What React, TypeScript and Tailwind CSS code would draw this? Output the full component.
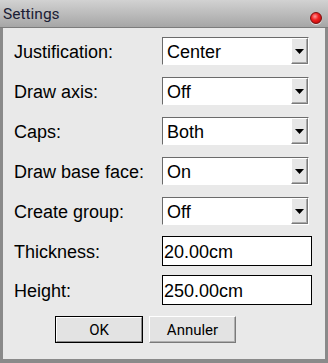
import React from "react";

const labelCls =
  "w-[148px] pt-[2px] text-[18px] leading-none text-black [font-family:'Liberation_Sans',Arial,sans-serif]";

function Dropdown({ value }: { value: string }) {
  return (
    <div className="flex h-[28px] w-[147px] border border-t-[#6b6b6b] border-l-[#6b6b6b] border-b-white border-r-white">
      <div className="flex flex-1 items-center bg-white pl-[4px] pt-[2px] text-[18px] leading-none text-black [font-family:'Liberation_Sans',Arial,sans-serif]">
        {value}
      </div>
      <div className="flex w-[17px] items-center justify-center border border-t-white border-l-white border-b-[#7a7a7a] border-r-[#7a7a7a] bg-[#e6e6e6] shadow-[inset_-1px_-1px_0_#a8a8a8]">
        <svg width="9" height="5" viewBox="0 0 9 5">
          <polygon points="0,0 9,0 4.5,5" fill="#000" />
        </svg>
      </div>
    </div>
  );
}

function TextInput({ value }: { value: string }) {
  return (
    <div className="flex h-[30px] w-[150px] items-center border border-black bg-white pl-[1px] pt-[1px] text-[18px] leading-none text-black [font-family:'Liberation_Sans',Arial,sans-serif]">
      {value}
    </div>
  );
}

export default function App() {
  const rows: [string, string][] = [
    ["Justification:", "Center"],
    ["Draw axis:", "Off"],
    ["Caps:", "Both"],
    ["Draw base face:", "On"],
    ["Create group:", "Off"],
  ];
  return (
    <div className="flex h-[363px] w-[328px] flex-col bg-[#8a8a8a]">
      <div className="relative flex h-[28px] items-center bg-gradient-to-b from-[#d2d2d2] to-[#a6a6a6] pl-[3px] pt-[3px] border-b border-[#7c7c7c]">
        <span className="text-[15.5px] leading-none text-[#1b2035] [font-family:Roboto,'Noto_Sans',sans-serif]">
          Settings
        </span>
        <div className="absolute left-[310px] top-[12px] h-[12px] w-[12px] rounded-full border border-[#7a1010] bg-[radial-gradient(circle_at_40%_35%,#ff9a9a_0%,#f02020_40%,#b00000_100%)] shadow-[0_1px_1px_rgba(255,255,255,0.7)]" />
      </div>
      <div className="flex flex-1 flex-col px-[3px] pb-[4px]">
        <div className="flex flex-1 flex-col bg-[#e9e9e9] pl-[11px] pt-[9px]">
          {rows.map(([l, v], i) => (
            <div key={i} className={`flex items-center ${i > 0 ? "mt-[12px]" : ""}`}>
              <div className={labelCls}>{l}</div>
              <Dropdown value={v} />
            </div>
          ))}
          <div className="mt-[11px] flex items-center">
            <div className={labelCls}>Thickness:</div>
            <TextInput value="20.00cm" />
          </div>
          <div className="mt-[9px] flex items-center">
            <div className={labelCls}>Height:</div>
            <TextInput value="250.00cm" />
          </div>
          <div className="mt-[11px] flex gap-[6px] pl-[41px]">
            <div className="h-[27px] w-[88px] border border-black">
              <div className="flex h-full w-full items-center justify-center border border-t-white border-l-white border-b-[#8a8a8a] border-r-[#8a8a8a] bg-[#e3e3e3] pt-[1px] text-[15px] leading-none text-black [font-family:Roboto,'Noto_Sans',sans-serif]">
                OK
              </div>
            </div>
            <div className="flex h-[27px] w-[87px] items-center justify-center border border-t-white border-l-white border-b-[#7a7a7a] border-r-[#7a7a7a] bg-[#e3e3e3] pt-[1px] shadow-[inset_-1px_-1px_0_#b0b0b0] text-[15px] leading-none text-black [font-family:Roboto,'Noto_Sans',sans-serif]">
              Annuler
            </div>
          </div>
        </div>
      </div>
    </div>
  );
}
